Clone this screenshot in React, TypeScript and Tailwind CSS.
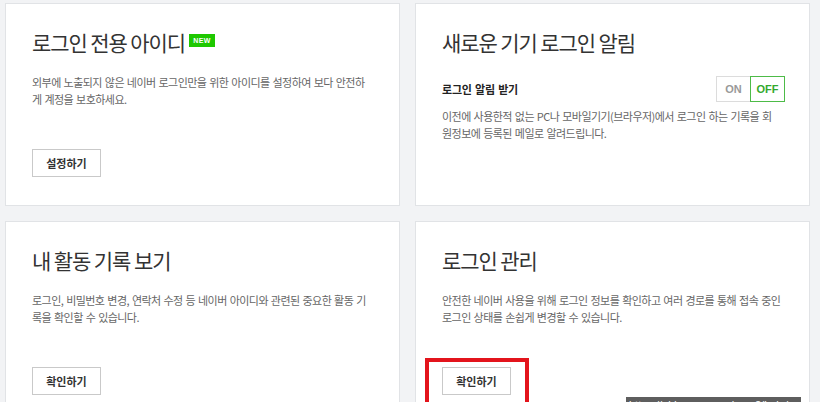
import React from 'react';

const font = { fontFamily: '"Noto Sans CJK KR", "Noto Sans", sans-serif' };

interface CardProps {
  title: string;
  badge?: boolean;
  children: React.ReactNode;
}

function Card({ title, badge, children }: CardProps) {
  return (
    <div className="h-[203px] bg-white border border-[#e1e3e6] pl-[26px] pr-[20px] pt-[23px]">
      <div className="flex items-center h-[30px]">
        <h2 className="text-[21px] tracking-[-1.1px] text-[#333] font-normal leading-[30px]">{title}</h2>
        {badge && (
          <span className="ml-[4px] mt-[-3px] inline-flex items-center justify-center w-[26px] h-[13px] bg-[#1ec800] text-white text-[7px] font-bold leading-none tracking-[0.3px]" style={{ fontFamily: '"Liberation Sans", Arial, sans-serif' }}>
            NEW
          </span>
        )}
      </div>
      {children}
    </div>
  );
}

function Desc({ children, className = 'w-[342px]' }: { children: React.ReactNode; className?: string }) {
  return (
    <p className={`text-[11px] tracking-[-0.55px] [word-spacing:1px] leading-[17px] text-[#666] ${className}`}>
      {children}
    </p>
  );
}

function Btn({ label }: { label: string }) {
  return (
    <button className="w-[69px] h-[28px] border border-[#c9c9c9] bg-white text-[11px] font-bold tracking-[0px] text-[#333]">
      {label}
    </button>
  );
}

export default function App() {
  return (
    <div className="relative w-[831px] h-[402px] overflow-hidden bg-white" style={font}>
      <div className="w-[820px] h-[402px] bg-[#f2f3f5] pt-[3px] pl-[5px]">
        <div className="grid grid-cols-[395px_395px] gap-[15px]">
          <Card title="로그인 전용 아이디" badge>
            <Desc className="mt-[17px] w-[342px]">외부에 노출되지 않은 네이버 로그인만을 위한 아이디를 설정하여 보다 안전하게 계정을 보호하세요.</Desc>
            <div className="mt-[41px]">
              <Btn label="설정하기" />
            </div>
          </Card>

          <Card title="새로운 기기 로그인 알림">
            <div className="mt-[19px] flex items-center justify-between w-[343px] h-[26px]">
              <span className="text-[11px] font-bold tracking-[-0.2px] [word-spacing:1px] text-[#222]">로그인 알림 받기</span>
              <div className="flex text-[11px] font-bold" style={{ fontFamily: '"Liberation Sans", Arial, sans-serif' }}>
                <span className="w-[34px] h-[26px] flex items-center justify-center border border-[#dcdcdc] border-r-0 text-[#999]">ON</span>
                <span className="w-[35px] h-[26px] flex items-center justify-center border border-[#4dbb47] text-[#33a92d]">OFF</span>
              </div>
            </div>
            <Desc className="mt-[6px] w-[335px]">이전에 사용한적 없는 PC나 모바일기기(브라우저)에서 로그인 하는 기록을 회원정보에 등록된 메일로 알려드립니다.</Desc>
          </Card>

          <Card title="내 활동 기록 보기">
            <Desc className="mt-[17px] w-[342px]">로그인, 비밀번호 변경, 연락처 수정 등 네이버 아이디와 관련된 중요한 활동 기록을 확인할 수 있습니다.</Desc>
            <div className="mt-[41px]">
              <Btn label="확인하기" />
            </div>
          </Card>

          <Card title="로그인 관리">
            <Desc className="mt-[17px] w-[342px]">안전한 네이버 사용을 위해 로그인 정보를 확인하고 여러 경로를 통해 접속 중인 로그인 상태를 손쉽게 변경할 수 있습니다.</Desc>
            <div className="mt-[41px]">
              <Btn label="확인하기" />
            </div>
          </Card>
        </div>
      </div>

      {/* annotation box */}
      <div className="absolute left-[425px] top-[358px] w-[104px] h-[52px] border-4 border-[#e3141c]" />

      {/* status bar url */}
      <div className="absolute left-[626px] top-[397px] w-[175px] h-[20px] bg-[#5e5e5e] px-[3px] pt-[1px] text-[11px] leading-[14px] text-white" style={{ fontFamily: '"Liberation Sans", Arial, sans-serif' }}>
        https://nid.naver.com/user2/help/
      </div>
    </div>
  );
}
